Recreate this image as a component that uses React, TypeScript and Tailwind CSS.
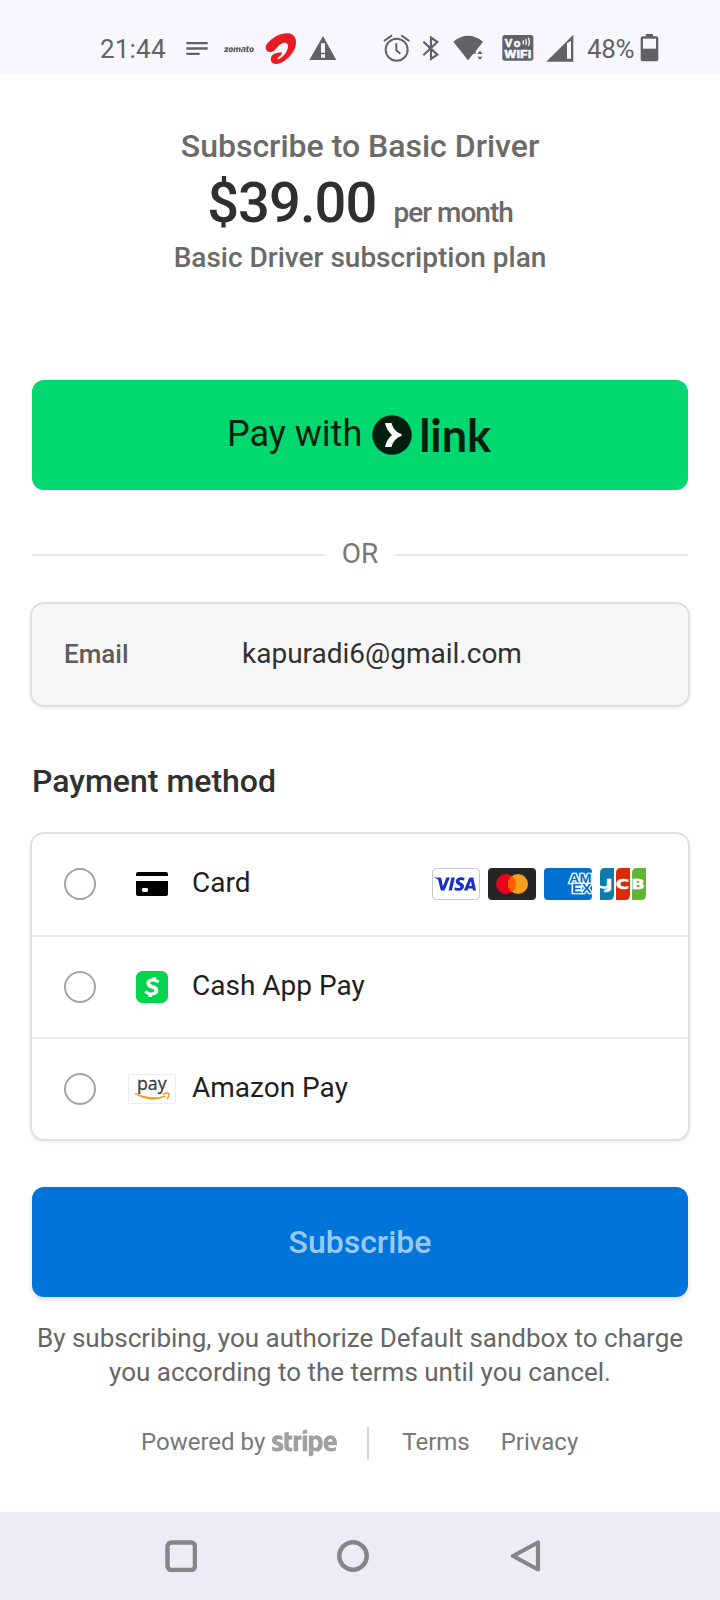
import type { ReactNode } from "react";
import { FaStripe } from "react-icons/fa";
import { SiCashapp, SiVisa, SiZomato } from "react-icons/si";

function StatusBar() {
  return (
    <header className="flex h-[74px] shrink-0 items-start bg-[#f8f7ff] pl-[100px] text-[#626266]">
      <span className="w-[86px] pt-[33px] text-[26px] leading-8 tracking-[0.2px]">21:44</span>
      <svg className="h-[74px] w-[22px]" viewBox="317 -60 66 222" fill="currentColor">
        <path d="M318 66h64v7h-64zM318 82h64v7h-64zM318 98h40v7h-40z" />
      </svg>
      <SiZomato className="mt-[34px] ml-[16px] size-[30px]" />
      <svg className="ml-[11px] h-[74px] w-[32px]" viewBox="555 -60 96 222" fill="#e81c24">
        <path d="M577 95C560 100 552 84 560 73C576 52 604 38 624 40C648 42 653 65 644 86C634 110 608 131 587 132C570 131 568 112 580 103C589 97 601 99 604 96C608 101 603 106 597 110C590 115 591 119 598 116C613 109 624 92 624 78C623 65 611 66 601 73C590 81 587 92 577 95Z" />
      </svg>
      <svg className="ml-[12px] h-[74px] w-[28px]" viewBox="686 -60 84 222" fill="currentColor">
        <path d="M728 48 768 120H687Z" />
        <path d="M722 70h12v28h-12zM722 103h12v10h-12z" fill="#f8f7ff" />
      </svg>
      <svg className="ml-[46px] h-[74px] w-[28px]" viewBox="40 -60 84 222" fill="none" stroke="currentColor" strokeWidth="6">
        <circle cx="81" cy="89" r="33" />
        <path d="M80 70v21l12 10M43 63l24-17M119 63 95 46" />
      </svg>
      <svg className="ml-[11px] h-[74px] w-[18px]" viewBox="157 -60 54 222" fill="none" stroke="currentColor" strokeWidth="6.5">
        <path d="M161 65l42 39-19 13V53l19 13-42 40" />
      </svg>
      <svg className="ml-[13px] h-[74px] w-[32px]" viewBox="250 -60 96 222" fill="currentColor">
        <path d="M251 65Q295 30 340 65L318 94V101H311L295 121Z" />
        <path d="M331 92l8 10h-16zM331 119l8-9h-16z" />
      </svg>
      <svg className="ml-[17px] h-[74px] w-[32px]" viewBox="397 -60 96 222">
        <rect x="398" y="45" width="93" height="77" rx="8" fill="currentColor" />
        <g fill="#f8f7ff" stroke="#f8f7ff" strokeWidth="1.5" className="font-['Roboto',sans-serif] font-bold">
          <text x="405" y="81" fontSize="35" textLength="47">Vo</text>
          <text x="404" y="114" fontSize="33" textLength="81" lengthAdjust="spacingAndGlyphs">WiFi</text>
        </g>
        <path d="M461 61v12M468 57q4 9 0 18M476 53q6 13 0 25" stroke="#f8f7ff" strokeWidth="4" fill="none" />
      </svg>
      <svg className="ml-[12px] h-[74px] w-[28px]" viewBox="526 -60 84 222" fill="currentColor">
        <path d="M527 125 608 44V125Z" />
        <path d="M589 70 601 62V116H589Z" fill="#f8f7ff" />
      </svg>
      <span className="ml-[13px] w-[48px] pt-[33px] text-[26px] leading-8 tracking-[-0.3px]">48%</span>
      <svg className="ml-[5px] h-[74px] w-[20px]" viewBox="811 -60 60 222" fill="currentColor">
        <path d="M828 42h22v7h10q6 0 6 6v63q0 6-6 6h-41q-6 0-6-6V55q0-6 6-6h9z" />
        <path d="M820 56h39v30h-39z" fill="#f8f7ff" />
      </svg>
    </header>
  );
}

function PaymentRow({ icon, label, first, children }: { icon: ReactNode; label: string; first?: boolean; children?: ReactNode }) {
  return (
    <div className={first ? "flex h-[101px] items-center pb-px" : "flex h-[102px] items-center border-t-2 border-[#e6e6e6]"}>
      <span className="ml-8 size-8 rounded-full border-2 border-[#a3a3a3] bg-white" />
      <span className="ml-8 flex w-12 justify-center">{icon}</span>
      <span className="ml-4 pb-[2px] text-[28px] leading-8 text-[#1f1f1f]">{label}</span>
      {children}
    </div>
  );
}

function CardIcon() {
  return (
    <svg className="h-6 w-8" viewBox="0 0 32 24">
      <path d="M2 0h28q2 0 2 2v2H0V2Q0 0 2 0zM0 9h32v13q0 2-2 2H2q-2 0-2-2z" />
      <rect x="6" y="16" width="6" height="4" rx="1.4" fill="#fff" />
    </svg>
  );
}

function CashIcon() {
  return (
    <span className="flex size-8 items-center justify-center rounded-[7px] bg-[#00d54b]">
      <span className="flex size-[20px] items-center justify-center bg-white">
        <SiCashapp className="size-[32px] shrink-0 text-[#00d54b]" />
      </span>
    </span>
  );
}

function AmazonPayIcon() {
  return (
    <svg className="h-[30px] w-12 overflow-visible" viewBox="0 0 48 30">
      <rect x="0.5" y="0.5" width="47" height="29" rx="1" fill="#fff" stroke="#ececec" />
      <text x="9" y="15.5" fontSize="18.5" textLength="29.5" lengthAdjust="spacingAndGlyphs" fill="#333e48" stroke="#333e48" strokeWidth="0.3" className="font-['Open_Sans',sans-serif]">pay</text>
      <path d="M7 19.500Q23 29.500 38 22Q23 26.500 7 19.500Z" fill="#f79c1c" stroke="#f79c1c" strokeWidth="1" strokeLinejoin="round" />
      <path d="M35.500 20q4-1.800 5.400-.5.600 2-1.500 5" fill="none" stroke="#f79c1c" strokeWidth="1.500" strokeLinecap="round" />
    </svg>
  );
}

function CardBrands() {
  return (
    <span className="mr-[42px] ml-auto flex gap-2">
      <span className="flex h-8 w-12 items-center justify-center rounded-[4px] border border-[#c9c9c9] bg-white pr-[2px]">
        <SiVisa className="size-[42px] shrink-0 text-[#1a2fc4]" />
      </span>
      <svg className="h-8 w-12" viewBox="0 0 48 32">
        <rect width="48" height="32" rx="4" fill="#252525" />
        <circle cx="18" cy="16" r="10" fill="#eb001b" />
        <circle cx="30" cy="16" r="10" fill="#f79e1b" />
        <path d="M24 8a10 10 0 0 1 0 16 10 10 0 0 1 0-16z" fill="#ff5f00" />
      </svg>
      <svg className="h-8 w-12" viewBox="0 0 48 32">
        <rect width="48" height="32" rx="4" fill="#016fd0" />
        <g fill="#016fd0" stroke="#fff" strokeWidth="2.4" paintOrder="stroke" fontSize="12" className="font-['Liberation_Sans',sans-serif] font-bold">
          <text x="25" y="14.8" textLength="22.5" lengthAdjust="spacingAndGlyphs">AM</text>
          <text x="28" y="25.3" textLength="19.5" lengthAdjust="spacingAndGlyphs">EX</text>
        </g>
      </svg>
      <svg className="h-8 w-[46px]" viewBox="0 0 46 32">
        <path d="M5 0h9v27q0 5-5 5H0V5q0-5 5-5z" fill="#0f7bad" />
        <path d="M21 0h9v27q0 5-5 5h-9V5q0-5 5-5z" fill="#d92b06" />
        <path d="M37 0h9v27q0 5-5 5h-9V5q0-5 5-5z" fill="#62b532" />
        <g fill="#fff" stroke="#fff" strokeWidth="0.4" fontSize="14" className="font-['DejaVu_Sans',sans-serif] font-bold">
          <text x="5.500" y="20.900" textLength="7" lengthAdjust="spacingAndGlyphs">J</text>
          <path d="M0 17.800q7 1.800 7-.6v2.800l-2 .7q-2.500 0-5-1z" />
          <text x="15.800" y="20.900" textLength="13.500" lengthAdjust="spacingAndGlyphs">C</text>
          <text x="31.300" y="20.900" textLength="13.500" lengthAdjust="spacingAndGlyphs">B</text>
        </g>
      </svg>
    </span>
  );
}

function NavBar() {
  return (
    <nav className="mt-auto flex h-[88px] shrink-0 items-center bg-[#ecebf6] pl-[165px]">
      <svg className="size-8" viewBox="0 0 32 32" fill="none" stroke="#868689" strokeWidth="4.500">
        <rect x="2.500" y="2.500" width="27.500" height="27.500" rx="4" />
      </svg>
      <svg className="ml-[140px] size-8" viewBox="0 0 32 32" fill="none" stroke="#868689" strokeWidth="4.500">
        <circle cx="16" cy="16" r="13.700" />
      </svg>
      <svg className="ml-[141px] size-8" viewBox="0 0 32 32" fill="none" stroke="#868689" strokeWidth="4.200" strokeLinejoin="round">
        <path d="M28 2.500V29.500L3 16Z" />
      </svg>
    </nav>
  );
}

export default function App() {
  return (
    <div className="flex h-[1600px] w-[720px] flex-col overflow-hidden bg-white font-['Roboto',sans-serif]">
      <StatusBar />
      <main className="flex flex-col px-[30px] pt-[52px]">
        <h1 className="text-center text-[32px] leading-10 font-medium text-[#6a6a6a]">Subscribe to Basic Driver</h1>
        <p className="mt-[7px] flex h-[60px] items-baseline justify-center leading-[60px] font-medium">
          <span className="text-[56px] tracking-[-0.9px] text-[#2f2f2f]">$39.00</span>
          <span className="ml-[17px] text-[28px] tracking-[-1px] text-[#6a6a6a]">per month</span>
        </p>
        <p className="mt-[7px] text-center text-[28px] leading-9 font-medium text-[#6a6a6a]">Basic Driver subscription plan</p>

        <button className="mx-[2px] mt-[104px] flex h-[110px] items-center rounded-xl bg-[#02d870] pl-[195px] text-[#011e0f]">
          <span className="pb-[3px] text-[36px] leading-10">Pay with</span>
          <svg className="ml-[10px] size-10" viewBox="0 0 40 40">
            <circle cx="20" cy="20" r="19.700" fill="#011e0f" />
            <path d="M13 8h6.500c1.300 5 4.200 9 10 11v2c-5.800 2-8.700 6-10 11H13c1-5 3.500-9 7-12-3.500-3-6-7-7-12z" fill="#fff" />
          </svg>
          <span className="ml-[7px] font-['Lato',sans-serif] text-[45px] leading-10 font-bold tracking-[-0.1px]">link</span>
        </button>

        <div className="mx-[2px] mt-12 flex h-[34px] items-center">
          <span className="h-0.5 flex-1 bg-[#e6e6e6]" />
          <span className="w-[70px] pb-[3px] text-center text-[28px] leading-8 text-[#777]">OR</span>
          <span className="h-0.5 flex-1 bg-[#e6e6e6]" />
        </div>

        <div className="mt-[30px] flex h-[105px] items-center rounded-[14px] border-2 border-[#e0e0e0] bg-[#f7f7f7] pl-8 shadow-[0_2px_4px_rgba(0,0,0,0.06)]">
          <span className="w-[178px] pb-[2px] text-[26px] leading-8 font-medium text-[#5c5c5c]">Email</span>
          <span className="pb-[2px] text-[28px] leading-8 text-[#303030]">kapuradi6@gmail.com</span>
        </div>

        <h2 className="mt-[54px] ml-[2px] text-[32px] leading-10 font-medium text-[#303030]">Payment method</h2>
        <section className="mt-[31px] flex flex-col rounded-[14px] border-2 border-[#e0e0e0] bg-white shadow-[0_2px_4px_rgba(0,0,0,0.06)]">
          <PaymentRow first icon={<CardIcon />} label="Card">
            <CardBrands />
          </PaymentRow>
          <PaymentRow icon={<CashIcon />} label="Cash App Pay" />
          <PaymentRow icon={<AmazonPayIcon />} label="Amazon Pay" />
        </section>

        <button className="mx-[2px] mt-[46px] h-[110px] rounded-xl bg-[#0074d9] text-[32px] leading-10 font-medium text-[#99c9f1] shadow-[0_3px_5px_rgba(0,0,0,0.12)]">
          Subscribe
        </button>
        <p className="mt-6 text-center text-[26px] leading-[34px] whitespace-nowrap text-[#666]">
          By subscribing, you authorize Default sandbox to charge
          <br />
          you according to the terms until you cancel.
        </p>

        <footer className="mt-[37px] flex h-[34px] items-center pl-[111px] text-[24px] leading-8 text-[#777]">
          <span className="pb-[2px]">Powered by</span>
          <FaStripe className="ml-[7px] h-[54px] w-[65px] text-[#a0a0a0]" />
          <span className="ml-[30px] h-[33px] w-0.5 bg-[#d4d4d4]" />
          <span className="ml-[33px] pb-[2px]">Terms</span>
          <span className="ml-[31px] pb-[2px]">Privacy</span>
        </footer>
      </main>
      <NavBar />
    </div>
  );
}
